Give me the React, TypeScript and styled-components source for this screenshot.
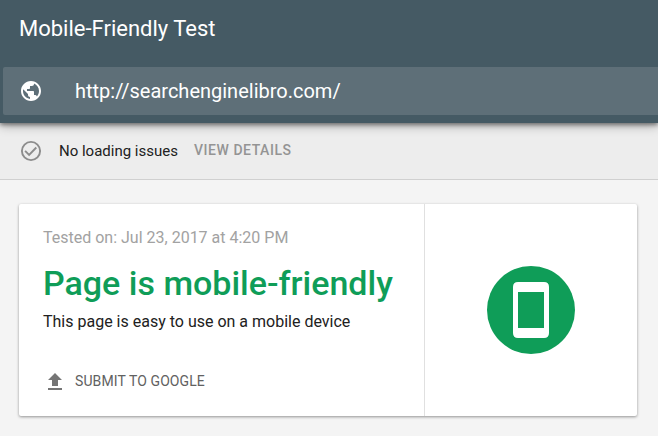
import React from "react";
import styled, { createGlobalStyle } from "styled-components";

const Global = createGlobalStyle`
  * { box-sizing: border-box; }
  body { margin: 0; background: #f4f4f4; font-family: Roboto, sans-serif; color: #212121; overflow: hidden; }
`;
const Page = styled.div`width: 658px; height: 436px; overflow: hidden; background: #f4f4f4;`;
const Header = styled.header`
  position: relative; height: 123px; padding-top: 2px; background: #455a64; color: #fff;
  box-shadow: 0 2px 4px rgba(0,0,0,.4), 0 3px 10px rgba(0,0,0,.28);
`;
const Title = styled.h1`margin: 0; height: 65px; padding: 0 0 0 19px; font-size: 22px; font-weight: 400; line-height: 54px;`;
const UrlBar = styled.div`
  display: flex; align-items: center; height: 48px; margin-left: 3px; padding-left: 16px;
  background: #5e6f78; border-radius: 2px 0 0 2px; font-size: 20px;
  svg { margin-right: 32px; }
`;
const Status = styled.div`
  display: flex; align-items: center; height: 57px; padding-left: 19px;
  background: #ededed; border-bottom: 1px solid #d0d0d0; font-size: 15px;
  svg { margin-right: 16px; }
`;
const Details = styled.button`
  margin: 0 0 2px 16px; padding: 0; border: 0; background: none; color: #949494;
  font: 500 14px Roboto, sans-serif; letter-spacing: .54px;
`;
const Card = styled.section`
  display: flex; width: 618px; height: 212px; margin: 24px 0 0 19px; background: #fff;
  border-radius: 2px; box-shadow: 0 1px 3px rgba(0,0,0,.4);
`;
const Result = styled.div`width: 406px; padding: 24px; border-right: 1px solid #e0e0e0;`;
const Tested = styled.div`font-size: 16px; line-height: 20px; color: #a2a2a2;`;
const Verdict = styled.h2`margin: 14px 0 0; font-size: 34px; line-height: 42px; font-weight: 500; color: #0f9d58; white-space: nowrap;`;
const Note = styled.p`margin: 8px 0 0; font-size: 16px; line-height: 20px;`;
const Submit = styled.button`
  display: flex; align-items: center; margin: 38px 0 0; padding: 0; border: 0; background: none;
  font: 400 14px Roboto, sans-serif; letter-spacing: .1px; color: #616161;
  svg { margin-right: 8px; }
`;
const SubmitLabel = styled.span`padding-bottom: 2px;`;
const Badge = styled.div`display: flex; flex: 1; align-items: center; justify-content: center;`;

const Icon = ({ d, color }: { d: string; color: string }) => (
  <svg width="24" height="24" viewBox="0 0 24 24" fill={color}><path d={d} /></svg>
);
const CheckIcon = () => (
  <svg width="24" height="24" viewBox="0 0 24 24" fill="none" stroke="#8c8c8c" strokeWidth="1.9">
    <circle cx="12" cy="12" r="9.1" />
    <path d="M6.1 11.8 10.1 15.8 17.3 8.5" />
  </svg>
);
const globe = "M12 2C6.48 2 2 6.48 2 12s4.48 10 10 10 10-4.48 10-10S17.52 2 12 2zm-1 17.93c-3.95-.49-7-3.85-7-7.93 0-.62.08-1.21.21-1.79L9 15v1c0 1.1.9 2 2 2v1.93zm6.9-2.54c-.26-.81-1-1.39-1.9-1.39h-1v-3c0-.55-.45-1-1-1H8v-2h2c.55 0 1-.45 1-1V7h2c1.1 0 2-.9 2-2v-.41c2.93 1.19 5 4.06 5 7.41 0 2.08-.8 3.97-2.1 5.39z";
const upload = "M9 16h6v-6h4l-7-7-7 7h4v6zm-4 2h14v2H5v-2z";

export default function App() {
  return (
    <Page>
      <Global />
      <Header>
        <Title>Mobile-Friendly Test</Title>
        <UrlBar><Icon d={globe} color="#fff" />http://searchenginelibro.com/</UrlBar>
      </Header>
      <Status><CheckIcon />No loading issues<Details>VIEW DETAILS</Details></Status>
      <Card>
        <Result>
          <Tested>Tested on: Jul 23, 2017 at 4:20 PM</Tested>
          <Verdict>Page is mobile-friendly</Verdict>
          <Note>This page is easy to use on a mobile device</Note>
          <Submit><Icon d={upload} color="#757575" /><SubmitLabel>SUBMIT TO GOOGLE</SubmitLabel></Submit>
        </Result>
        <Badge>
          <svg width="88" height="88" viewBox="0 0 88 88">
            <circle cx="44" cy="44" r="44" fill="#0f9d58" />
            <path fillRule="evenodd" fill="#fff" d="M31 16H57Q62 16 62 21V67Q62 72 57 72H31Q26 72 26 67V21Q26 16 31 16ZM31 26V62H57V26Z" />
          </svg>
        </Badge>
      </Card>
    </Page>
  );
}
